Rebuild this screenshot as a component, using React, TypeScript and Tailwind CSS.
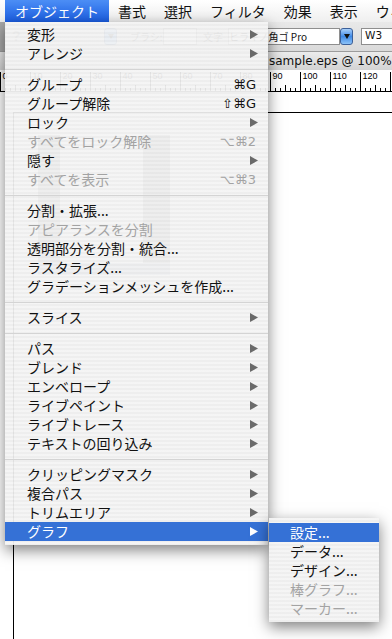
import React from "react";

type Row =
  | { kind: "sep" }
  | {
      kind: "item";
      label: string;
      shortcut?: string;
      arrow?: boolean;
      disabled?: boolean;
      selected?: boolean;
    };

const SEP: Row = { kind: "sep" };
const it = (
  label: string,
  o: { shortcut?: string; arrow?: boolean; disabled?: boolean; selected?: boolean } = {}
): Row => ({ kind: "item", label, ...o });

const mainRows: Row[] = [
  it("変形", { arrow: true }),
  it("アレンジ", { arrow: true }),
  SEP,
  it("グループ", { shortcut: "⌘G" }),
  it("グループ解除", { shortcut: "⇧⌘G" }),
  it("ロック", { arrow: true }),
  it("すべてをロック解除", { shortcut: "⌥⌘2", disabled: true }),
  it("隠す", { arrow: true }),
  it("すべてを表示", { shortcut: "⌥⌘3", disabled: true }),
  SEP,
  it("分割・拡張..."),
  it("アピアランスを分割", { disabled: true }),
  it("透明部分を分割・統合..."),
  it("ラスタライズ..."),
  it("グラデーションメッシュを作成..."),
  SEP,
  it("スライス", { arrow: true }),
  SEP,
  it("パス", { arrow: true }),
  it("ブレンド", { arrow: true }),
  it("エンベロープ", { arrow: true }),
  it("ライブペイント", { arrow: true }),
  it("ライブトレース", { arrow: true }),
  it("テキストの回り込み", { arrow: true }),
  SEP,
  it("クリッピングマスク", { arrow: true }),
  it("複合パス", { arrow: true }),
  it("トリムエリア", { arrow: true }),
  it("グラフ", { arrow: true, selected: true }),
];

const subRows: Row[] = [
  it("設定...", { selected: true }),
  it("データ..."),
  it("デザイン..."),
  it("棒グラフ...", { disabled: true }),
  it("マーカー...", { disabled: true }),
];

function Arrow({ color }: { color: string }) {
  return (
    <svg width="8" height="9" viewBox="0 0 8 9" className="block">
      <path d="M0 0 L8 4.5 L0 9 Z" fill={color} />
    </svg>
  );
}

function MenuRow({ row, pl }: { row: Row; pl: string }) {
  if (row.kind === "sep") {
    return (
      <div className="h-[12px] flex items-center">
        <div className="h-px w-full bg-[#d4d4d4]" />
      </div>
    );
  }
  const sel = row.selected;
  const textColor = sel ? "text-white" : row.disabled ? "text-[#a3a3a3]" : "text-[#111111]";
  return (
    <div
      className={`h-[19px] flex items-center pr-[10px] ${pl} ${
        sel ? "bg-[#3571d6]" : ""
      } ${textColor}`}
    >
      <span className="flex-1 whitespace-nowrap text-[14px] leading-[19px]">{row.label}</span>
      {row.shortcut && (
        <span className="mr-[2px] whitespace-nowrap text-[13px] leading-[19px] font-['DejaVu_Sans',sans-serif]">
          {row.shortcut}
        </span>
      )}
      {row.arrow && <Arrow color={sel ? "#ffffff" : "#6a6a6a"} />}
    </div>
  );
}

const stripes =
  "bg-[image:repeating-linear-gradient(180deg,rgba(244,244,244,0.94)_0px,rgba(244,244,244,0.94)_2px,rgba(237,237,237,0.94)_2px,rgba(237,237,237,0.94)_4px)]";

function MenuBar() {
  const others = ["書式", "選択", "フィルタ", "効果", "表示", "ウィンドウ"];
  return (
    <div className="h-[22px] shrink-0 flex items-stretch bg-linear-to-b from-white to-[#efefef] text-[14px] whitespace-nowrap overflow-hidden">
      <div className="ml-[5px] px-[10px] flex items-center text-white bg-linear-to-b from-[#4c8ef5] to-[#1b5de2]">
        オブジェクト
      </div>
      {others.map((o) => (
        <div key={o} className="px-[9px] flex items-center text-[#111111]">
          {o}
        </div>
      ))}
    </div>
  );
}

function BlueButton() {
  return (
    <div className="w-[13px] h-[17px] shrink-0 rounded-[3px] border border-[#3b5f98] bg-linear-to-b from-[#a9d0fa] via-[#3f8ae6] to-[#8cc2f7] flex items-center justify-center">
      <svg width="6" height="5" viewBox="0 0 6 5" className="block">
        <path d="M0 0 L6 0 L3 5 Z" fill="#111" />
      </svg>
    </div>
  );
}

function Toolbar() {
  return (
    <div className="h-[30px] shrink-0 flex items-center bg-linear-to-b from-[#e9e9e9] to-[#dadada] border-b border-[#9c9c9c] overflow-hidden whitespace-nowrap">
      <div className="w-[6px] self-stretch shrink-0 bg-[#a9a9a9]" />
      <div className="ml-[6px] w-[9px] shrink-0 text-[14px] font-bold text-[#8a8a8a] font-['Liberation_Sans',sans-serif]">
        ?
      </div>
      <div className="ml-[83px]">
        <BlueButton />
      </div>
      <div className="ml-[13px] w-[30px] shrink-0 text-[10px] text-[#333]">ブラシ:</div>
      <div className="ml-[3px] w-[34px] h-[17px] shrink-0 bg-white border border-[#8a8a8a]" />
      <div className="ml-[6px] w-[22px] shrink-0 text-[10px] text-[#333]">文字</div>
      <div className="ml-[3px] w-[112px] h-[17px] shrink-0 bg-white border border-[#8e8e8e] text-[10px] leading-[15px] pl-[0px] text-[#111] overflow-hidden">
        ヒラギノ角ゴ Pro
      </div>
      <BlueButton />
      <div className="ml-[8px] w-[40px] h-[17px] shrink-0 bg-white border border-[#8e8e8e] text-[10.5px] leading-[13px] pl-[3px] text-[#111] font-['DejaVu_Sans',sans-serif]">
        W3
      </div>
    </div>
  );
}

function TitleBar() {
  return (
    <div className="h-[18px] shrink-0 flex items-center bg-linear-to-b from-[#ececec] to-[#d3d3d3] overflow-hidden whitespace-nowrap">
      <span className="pl-[269px] text-[12px] leading-[18px] text-[#111] font-['DejaVu_Sans',sans-serif]">
        sample.eps @ 100%
      </span>
    </div>
  );
}

function Ruler() {
  const majors = Array.from({ length: 14 }, (_, i) => i);
  const minors = Array.from({ length: 80 }, (_, i) => i * 5).filter((x) => x % 30 !== 0);
  return (
    <div className="h-[22px] shrink-0 bg-white border-b border-black">
      <svg width="392" height="21" viewBox="0 0 392 21" className="block">
        {majors.map((i) => (
          <g key={i}>
            <line x1={i * 30 + 0.5} y1={2} x2={i * 30 + 0.5} y2={21} stroke="#000" strokeWidth={1} />
            <text
              x={i * 30 + 2.5}
              y={9}
              fontSize={9}
              fill="#000"
              fontFamily="Liberation Sans, sans-serif"
            >
              {i * 10}
            </text>
          </g>
        ))}
        {minors.map((x) => (
          <line
            key={x}
            x1={x + 0.5}
            y1={x % 30 === 15 ? 15 : 18}
            x2={x + 0.5}
            y2={21}
            stroke="#000"
            strokeWidth={1}
          />
        ))}
      </svg>
    </div>
  );
}

function Canvas() {
  return (
    <div className="flex-1 bg-white">
      <div className="relative ml-[13px] mt-[20px] h-[600px] border-l border-t border-black">
        <svg width="200" height="180" viewBox="0 0 200 180" className="absolute left-[24px] top-[22px]">
          <rect x="0" y="0" width="22" height="138" fill="#8e8e8e" />
          <rect x="105" y="-2" width="27" height="140" fill="#8e8e8e" />
          <rect x="0" y="128" width="132" height="12" fill="#a8b2c8" />
        </svg>
      </div>
    </div>
  );
}

function MainMenu() {
  return (
    <div
      className={`absolute left-[5px] top-[22px] w-[263px] pt-[3px] pb-[4px] ${stripes} shadow-[0_5px_14px_rgba(0,0,0,0.5)]`}
    >
      {mainRows.map((r, i) => (
        <MenuRow key={i} row={r} pl="pl-[22px]" />
      ))}
    </div>
  );
}

function SubMenu() {
  return (
    <div
      className={`absolute left-[269px] top-[518px] w-[110px] pt-[5px] pb-[4px] ${stripes} shadow-[0_5px_14px_rgba(0,0,0,0.5)]`}
    >
      {subRows.map((r, i) => (
        <MenuRow key={i} row={r} pl="pl-[21px]" />
      ))}
    </div>
  );
}

export default function App() {
  return (
    <div className="relative w-[392px] h-[639px] overflow-hidden bg-white flex flex-col font-['Noto_Sans_CJK_JP',sans-serif] text-black select-none">
      <MenuBar />
      <Toolbar />
      <TitleBar />
      <Ruler />
      <Canvas />
      <MainMenu />
      <SubMenu />
    </div>
  );
}
